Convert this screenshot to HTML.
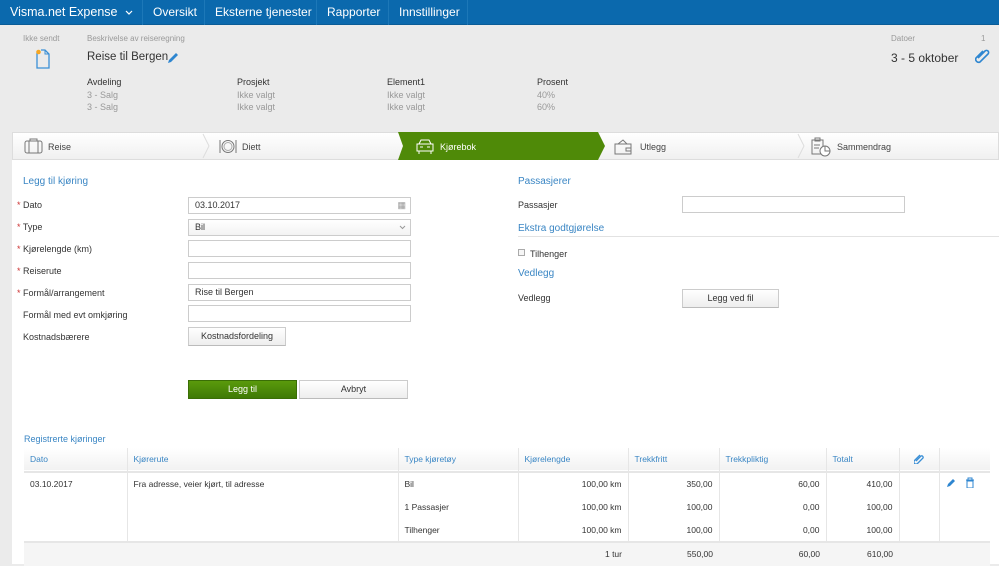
<!DOCTYPE html>
<html><head><meta charset="utf-8"><style>
*{box-sizing:border-box;margin:0;padding:0}
body{width:999px;height:564px;overflow:hidden;background:#ebebeb;font-family:"Liberation Sans",sans-serif;font-size:9px;color:#333;position:relative}
.a{position:absolute;white-space:nowrap}
.nav{position:absolute;left:0;top:0;width:999px;height:25px;background:#0b69ad;border-bottom:1px solid #0a5c97}
.nav .i{position:absolute;top:0;height:25px;line-height:25px;color:#fff;font-size:12px;border-right:1px solid #1d78b8;padding-left:10px}
.g{color:#999}
.blue{color:#3a86c4;font-size:10px}
.inp{position:absolute;height:17px;border:1px solid #ccc;background:#fff;font-size:9px;line-height:15px;padding-left:6px}
.btn{position:absolute;height:19px;border:1px solid #ccc;border-bottom-color:#bbb;background:linear-gradient(#fff,#eee);text-align:center;line-height:17px;font-size:9px}
.req{color:#c33}
.tab{position:absolute;top:134px;height:26px;line-height:26px;font-size:9px;color:#444}
table{position:absolute;left:24px;top:448px;width:966px;border-collapse:collapse;font-size:8.5px}
td{height:23.5px;padding:0 6px;border-left:1px solid #e6e6e6}
td:first-child{border-left:none}
.r{text-align:right}
</style></head><body>
<div class="nav">
<div class="i" style="left:0;width:143px;font-size:12.5px">Visma.net Expense</div>
<svg class="a" style="left:125px;top:9px" width="8" height="8"><path d="M1 2l3 3 3-3" fill="none" stroke="#fff" stroke-width="1.2"/></svg>
<div class="i" style="left:143px;width:62px">Oversikt</div>
<div class="i" style="left:205px;width:112px">Eksterne tjenester</div>
<div class="i" style="left:317px;width:72px">Rapporter</div>
<div class="i" style="left:389px;width:79px">Innstillinger</div>
</div>
<div class="a g" style="left:23px;top:34px;font-size:8px">Ikke sendt</div>
<svg class="a" style="left:34px;top:48px" width="18" height="22"><path d="M3 5v15h12V6l-4-4H7" fill="none" stroke="#3a8fd6" stroke-width="1.3"/><path d="M11 2v4h4" fill="none" stroke="#3a8fd6" stroke-width="1"/><circle cx="4.5" cy="4" r="2.3" fill="#f5a623"/></svg>
<div class="a g" style="left:87px;top:34px;font-size:8px">Beskrivelse av reiseregning</div>
<div class="a" style="left:87px;top:51px;font-size:11.5px;color:#333">Reise til Bergen</div>
<svg class="a" style="left:166px;top:51px" width="14" height="14"><path d="M2 12l1-3 7-7 2 2-7 7z" fill="#2e86d0"/></svg>
<div class="a" style="left:87px;top:77px;font-size:9px">Avdeling</div>
<div class="a g" style="left:87px;top:90px">3 - Salg</div><div class="a g" style="left:87px;top:102px">3 - Salg</div>
<div class="a" style="left:237px;top:77px">Prosjekt</div>
<div class="a g" style="left:237px;top:90px">Ikke valgt</div><div class="a g" style="left:237px;top:102px">Ikke valgt</div>
<div class="a" style="left:387px;top:77px">Element1</div>
<div class="a g" style="left:387px;top:90px">Ikke valgt</div><div class="a g" style="left:387px;top:102px">Ikke valgt</div>
<div class="a" style="left:537px;top:77px">Prosent</div>
<div class="a g" style="left:537px;top:90px">40%</div><div class="a g" style="left:537px;top:102px">60%</div>
<div class="a g" style="left:891px;top:34px;font-size:8px">Datoer</div>
<div class="a g" style="left:981px;top:34px;font-size:8px">1</div>
<div class="a" style="left:891px;top:51px;font-size:12px">3 - 5 oktober</div>
<svg class="a" style="left:975px;top:48px" width="16" height="16"><path d="M4 12l7-7a2 2 0 0 1 3 3l-8 8a3 3 0 0 1-4-4l7-7" fill="none" stroke="#2e86d0" stroke-width="1.6" transform="translate(-1,-2)"/></svg>
<div class="a" style="left:12px;top:160px;width:987px;height:404px;background:#fff"></div>
<div class="a" style="left:12px;top:132px;width:987px;height:28px;background:linear-gradient(#fff,#f0f0f0);border:1px solid #ddd"></div>
<svg class="a" style="left:200px;top:133px" width="12" height="27"><path d="M3 1l6 12-6 12" fill="none" stroke="#ddd"/></svg>
<svg class="a" style="left:795px;top:133px" width="12" height="27"><path d="M3 1l6 12-6 12" fill="none" stroke="#ddd"/></svg>
<svg class="a" style="left:398px;top:132px" width="210" height="28"><path d="M0 0h200l7 14-7 14H0l5-14z" fill="#4f8a08"/></svg>
<svg class="a" style="left:24px;top:138px" width="20" height="17"><rect x="1" y="3" width="17" height="12" rx="2" fill="none" stroke="#777"/><path d="M6 3V1h7v2M5 3v12M14 3v12" fill="none" stroke="#777"/></svg>
<div class="tab" style="left:48px">Reise</div>
<svg class="a" style="left:218px;top:138px" width="20" height="17"><circle cx="10" cy="8.5" r="6" fill="none" stroke="#777"/><circle cx="10" cy="8.5" r="4" fill="none" stroke="#aaa"/><path d="M2 2v13M18 2v13" stroke="#777"/></svg>
<div class="tab" style="left:242px">Diett</div>
<svg class="a" style="left:415px;top:138px" width="20" height="17"><path d="M4 6l2-4h8l2 4M2 6h16v7H2zM4 13v3M16 13v3M5 9h3M12 9h3" fill="none" stroke="#fff"/></svg>
<div class="tab" style="left:440px;color:#fff">Kjørebok</div>
<svg class="a" style="left:614px;top:138px" width="20" height="17"><path d="M1 6h16v10H1zM4 6l5-4 4 4M12 10h5v3h-5z" fill="none" stroke="#777"/></svg>
<div class="tab" style="left:640px">Utlegg</div>
<svg class="a" style="left:810px;top:137px" width="22" height="20"><path d="M2 3h11v14H2zM5 1h5v3H5zM4 8h6M4 11h5" fill="none" stroke="#777"/><circle cx="15" cy="14" r="5" fill="#fff" stroke="#777"/><path d="M15 9v5h5" fill="none" stroke="#777"/></svg>
<div class="tab" style="left:837px">Sammendrag</div>
<div class="a blue" style="left:23px;top:176px">Legg til kjøring</div>
<div class="a" style="left:17px;top:200px"><span class="req">*</span> Dato</div>
<div class="a" style="left:17px;top:222px"><span class="req">*</span> Type</div>
<div class="a" style="left:17px;top:244px"><span class="req">*</span> Kjørelengde (km)</div>
<div class="a" style="left:17px;top:266px"><span class="req">*</span> Reiserute</div>
<div class="a" style="left:17px;top:288px"><span class="req">*</span> Formål/arrangement</div>
<div class="a" style="left:23px;top:310px">Formål med evt omkjøring</div>
<div class="a" style="left:23px;top:332px">Kostnadsbærere</div>
<div class="inp" style="left:188px;top:197px;width:223px">03.10.2017<span style="position:absolute;right:4px;color:#999">▦</span></div>
<div class="inp" style="left:188px;top:219px;width:223px;background:linear-gradient(#fff,#f3f3f3)">Bil<svg style="position:absolute;right:4px;top:5px" width="7" height="5"><path d="M1 1l2.5 2.5L6 1" fill="none" stroke="#999"/></svg></div>
<div class="inp" style="left:188px;top:240px;width:223px"></div>
<div class="inp" style="left:188px;top:262px;width:223px"></div>
<div class="inp" style="left:188px;top:284px;width:223px">Rise til Bergen</div>
<div class="inp" style="left:188px;top:305px;width:223px"></div>
<div class="btn" style="left:188px;top:327px;width:98px">Kostnadsfordeling</div>
<div class="btn" style="left:188px;top:380px;width:109px;background:linear-gradient(#5a9a0c,#3f7a05);color:#fff;border-color:#3a6e05">Legg til</div>
<div class="btn" style="left:299px;top:380px;width:109px">Avbryt</div>
<div class="a blue" style="left:518px;top:176px">Passasjerer</div>
<div class="a" style="left:518px;top:200px">Passasjer</div>
<div class="inp" style="left:682px;top:196px;width:223px"></div>
<div class="a blue" style="left:518px;top:223px">Ekstra godtgjørelse</div>
<div class="a" style="left:518px;top:236px;width:481px;height:1px;background:#e2e2e2"></div>
<div class="a" style="left:518px;top:249px;width:7px;height:7px;border:1px solid #aaa;background:#f6f6f6"></div>
<div class="a" style="left:530px;top:249px">Tilhenger</div>
<div class="a blue" style="left:518px;top:268px">Vedlegg</div>
<div class="a" style="left:518px;top:293px">Vedlegg</div>
<div class="btn" style="left:682px;top:289px;width:97px">Legg ved fil</div>
<div class="a blue" style="left:24px;top:434px;font-size:9px">Registrerte kjøringer</div>
<table>
<tr style="background:linear-gradient(#fff,#f2f2f2);color:#3a86c4;border-bottom:2px solid #e6e6e6"><td style="width:103px">Dato</td><td style="width:271px">Kjørerute</td><td style="width:120px">Type kjøretøy</td><td style="width:110px">Kjørelengde</td><td style="width:91px">Trekkfritt</td><td style="width:107px">Trekkpliktig</td><td style="width:73px">Totalt</td><td style="width:40px;text-align:center"><svg width="10" height="11"><path d="M2 8l5-5a1.5 1.5 0 0 1 2 2l-5.5 5.5a2 2 0 0 1-3-3L6 2" fill="none" stroke="#3a8fd6" stroke-width="1.3"/></svg></td><td></td></tr>
<tr><td>03.10.2017</td><td>Fra adresse, veier kjørt, til adresse</td><td>Bil</td><td class="r">100,00 km</td><td class="r">350,00</td><td class="r">60,00</td><td class="r">410,00</td><td></td><td><svg width="30" height="11"><path d="M1 10l1-3 5-5 2 2-5 5z" fill="#2e86d0"/><path d="M20 3h8M22 3V1h4v2M21 4h6v7h-6z" fill="none" stroke="#2e86d0"/></svg></td></tr>
<tr><td></td><td></td><td>1 Passasjer</td><td class="r">100,00 km</td><td class="r">100,00</td><td class="r">0,00</td><td class="r">100,00</td><td></td><td></td></tr>
<tr style="border-bottom:2px solid #e6e6e6"><td></td><td></td><td>Tilhenger</td><td class="r">100,00 km</td><td class="r">100,00</td><td class="r">0,00</td><td class="r">100,00</td><td></td><td></td></tr>
<tr style="background:#f5f5f5"><td style="border:none"></td><td style="border:none"></td><td style="border:none"></td><td class="r" style="border:none">1 tur</td><td class="r" style="border:none">550,00</td><td class="r" style="border:none">60,00</td><td class="r" style="border:none">610,00</td><td style="border:none"></td><td style="border:none"></td></tr>
</table>
</body></html>
